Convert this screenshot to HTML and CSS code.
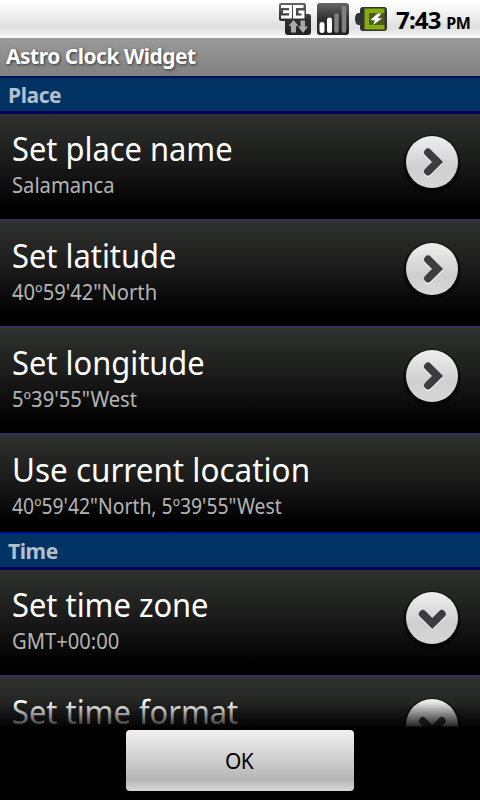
FILE: index.html
```html
<!DOCTYPE html>
<html lang="en">
<head>
    <meta charset="UTF-8">
    <title>Astro Clock Widget</title>
    <link rel="stylesheet" href="styles.css">
</head>
<body>
    <svg width="0" height="0" class="defs">
        <defs>
            <linearGradient id="dark" x1="0" y1="0" x2="0" y2="1">
                <stop offset="0" stop-color="#666"/>
                <stop offset="0.5" stop-color="#303030"/>
                <stop offset="1" stop-color="#222"/>
            </linearGradient>
            <linearGradient id="disc" x1="0" y1="0" x2="0" y2="1">
                <stop offset="0" stop-color="#f0eff0"/>
                <stop offset="0.6" stop-color="#cfcfd0"/>
                <stop offset="1" stop-color="#d8d8d9"/>
            </linearGradient>
            <symbol id="right" viewBox="0 0 60 60">
                <circle cx="30" cy="32" r="29" fill="#000" opacity="0.45"/>
                <circle cx="30" cy="30" r="26" fill="url(#disc)"/>
                <path d="M26 21l9.500 9.500-9.500 9.500" transform="translate(0 1)" stroke="#f4f4f4" class="arrow"/>
                <path d="M26 20.500l9.500 9.500-9.500 9.500" stroke="#3d3d3f" class="arrow"/>
            </symbol>
            <symbol id="down" viewBox="0 0 60 60">
                <circle cx="30" cy="32" r="29" fill="#000" opacity="0.45"/>
                <circle cx="30" cy="30" r="26" fill="url(#disc)"/>
                <path d="M20.800 26l9.500 9.500 9.500-9.500" transform="translate(0 1)" stroke="#f4f4f4" class="arrow"/>
                <path d="M20.800 26l9.500 9.500 9.500-9.500" stroke="#3d3d3f" class="arrow"/>
            </symbol>
        </defs>
    </svg>

    <div class="status-bar">
        <svg width="32" height="32" viewBox="0 0 32 32">
            <path d="M2 0h23q2 0 2 2v9h3q2 0 2 2v16q0 3-3 3H9q-3 0-3-3V18H2q-2 0-2-2V2q0-2 2-2z" fill="url(#dark)"/>
            <path d="M2 3.500h9.500v10.500H2M4 8.800h7.500M24.500 3.500h-9v10.500h8.500V9h-4.500" fill="none" stroke="#fff" stroke-width="2.900"/>
            <path d="M14.500 17l5 6H17v6.500h-5V23H9.500zM21.500 17.500h4.500v6h3L24 30l-5-6.500h2.500z" fill="#aaa"/>
        </svg>
        <svg width="32" height="32" viewBox="0 0 32 32">
            <rect width="32" height="32" rx="3" fill="url(#dark)"/>
            <path d="M5 21.500v6M12.500 17v10.500" stroke="#fff" stroke-width="5" stroke-linecap="round"/>
            <path d="M19.500 12.500v15M27 5v22.500" stroke="#808080" stroke-width="4.500" stroke-linecap="round"/>
        </svg>
        <svg width="32" height="24" viewBox="0 0 32 24" class="battery">
            <path d="M8 0h21q3 0 3 3v18q0 3-3 3H8q-3 0-3-3v-3H3q-3-1-3-6t3-6h2V3q0-3 3-3z" fill="#333"/>
            <path d="M9.500 1.500h20v4.500H14v12h15.500v4.500h-20z" fill="#86ab0c"/>
            <path d="M14 6h15.500v12H14z" fill="#4d5a22"/>
            <path d="M22.500 6.500l-7 6.500 4.500.5-2 4.500 9-6.500-4.500-.5 4-4.500z" fill="#fff"/>
        </svg>
        <div class="clock">7:43 <span>PM</span></div>
    </div>
    <div class="title-bar">Astro Clock Widget</div>

    <div class="list">
        <div class="category place">Place</div>
        <div class="item first">
            <div>
                <div class="name">Set place name</div>
                <div class="summary">Salamanca</div>
            </div>
            <svg class="more"><use href="#right"/></svg>
        </div>
        <div class="item">
            <div>
                <div class="name">Set latitude</div>
                <div class="summary">40º59'42"North</div>
            </div>
            <svg class="more"><use href="#right"/></svg>
        </div>
        <div class="item">
            <div>
                <div class="name">Set longitude</div>
                <div class="summary">5º39'55"West</div>
            </div>
            <svg class="more"><use href="#right"/></svg>
        </div>
        <div class="item short">
            <div>
                <div class="name">Use current location</div>
                <div class="summary">40º59'42"North, 5º39'55"West</div>
            </div>
        </div>
        <div class="category">Time</div>
        <div class="item first">
            <div>
                <div class="name">Set time zone</div>
                <div class="summary">GMT+00:00</div>
            </div>
            <svg class="more"><use href="#down"/></svg>
        </div>
        <div class="item">
            <div>
                <div class="name">Set time format</div>
            </div>
            <svg class="more"><use href="#down"/></svg>
        </div>
        <div class="fade"></div>
    </div>

    <div class="footer">
        <button type="button">OK</button>
    </div>
</body>
</html>
```

FILE: styles.css
```css
* {
    box-sizing: border-box;
}

body {
    margin: 0;
    height: 800px;
    display: flex;
    flex-direction: column;
    overflow: hidden;
    background: #000;
    color: #fff;
    font-family: "Noto Sans", "Open Sans", sans-serif;
}

.defs {
    position: absolute;
}

.status-bar {
    height: 38px;
    flex: none;
    display: flex;
    align-items: flex-start;
    justify-content: flex-end;
    gap: 6px;
    padding: 3px 10px 0 0;
    background: linear-gradient(#fff, #f4f4f4 30%, #dedede 72%, #eee 88%, #fff);
    color: #000;
}

.battery {
    margin-top: 4px;
}

.clock {
    width: 74px;
    margin-left: 3px;
    font-size: 24px;
    line-height: 33px;
    font-weight: bold;
    letter-spacing: -0.8px;
    white-space: nowrap;
}

.clock span {
    font-size: 16px;
    letter-spacing: -0.3px;
}

.title-bar {
    height: 38px;
    flex: none;
    padding-left: 6px;
    background: linear-gradient(#9a9a9a, #808080);
    font-size: 21px;
    line-height: 37px;
    font-weight: bold;
    letter-spacing: -0.5px;
    text-shadow: 1px 1px 3px #333;
}

.list {
    position: relative;
    height: 652px;
    flex: none;
    overflow: hidden;
}

.category {
    height: 38px;
    padding-left: 8px;
    background: #003264;
    border-top: 2px solid #0010a0;
    border-bottom: 3px solid #000058;
    color: #b4bfcb;
    font-size: 21px;
    line-height: 34px;
    font-weight: bold;
    letter-spacing: -0.4px;
}

.place {
    border-top-color: #000f58;
}

.item {
    height: 107px;
    display: flex;
    justify-content: space-between;
    padding: 15px 18px 0 12px;
    border-top: 2px solid #34305a;
    background: linear-gradient(#30322f, #1a1b1a 45%, #000 90%);
}

.first {
    height: 105px;
    border-top: none;
}

.short {
    height: 99px;
}

/* slightly condensed lettering */
.name,
.summary {
    transform: scaleX(0.935);
    transform-origin: left;
    white-space: nowrap;
}

.name {
    font-size: 33px;
    line-height: 39px;
}

.summary {
    margin-top: 5px;
    color: #b4b4b4;
    font-size: 21px;
    line-height: 25px;
    transform: scaleX(0.96);
}

.short .name {
    transform: scaleX(0.952);
}

.short .summary {
    transform: scaleX(0.922);
}

.more {
    width: 60px;
    height: 62px;
    margin-top: 2px;
}

.arrow {
    fill: none;
    stroke-width: 7.8px;
    stroke-linecap: round;
    stroke-linejoin: miter;
}

.fade {
    position: absolute;
    left: 0;
    right: 0;
    bottom: 0;
    height: 26px;
    background: linear-gradient(rgba(0,0,0,0), rgba(0,0,0,0.8) 92%, #000 96%);
}

.footer {
    display: flex;
    justify-content: center;
    padding-top: 2px;
}

button {
    width: 228px;
    height: 61px;
    padding: 1px 2px 0 0;
    border: none;
    border-radius: 4px;
    background: linear-gradient(#f2f0f1, #d4d4d4 40%, #b5b5b5 82%, #d8d8d8);
    color: #000;
    font-family: inherit;
    font-size: 21px;
    letter-spacing: -0.7px;
}
```
